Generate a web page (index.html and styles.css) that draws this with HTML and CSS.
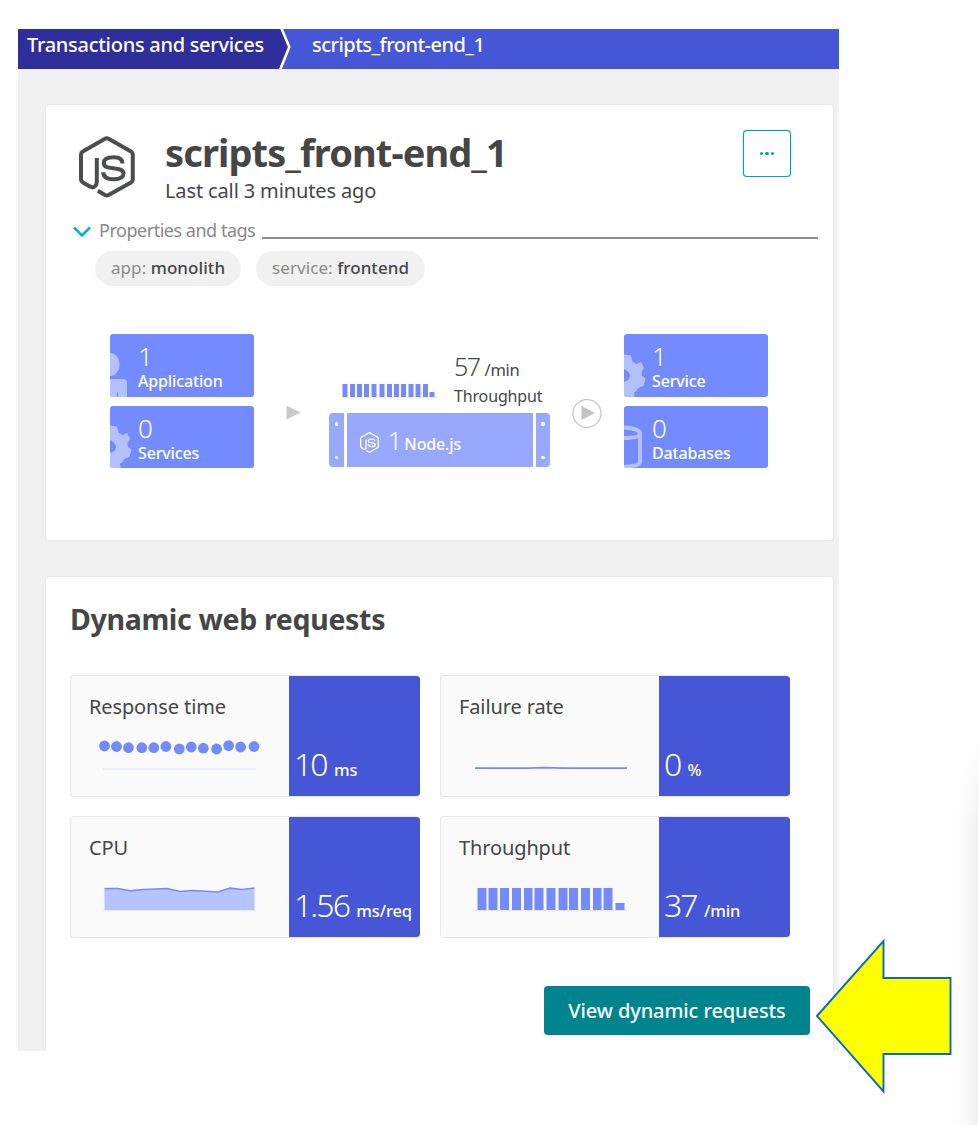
FILE: index.html
```html
<!DOCTYPE html>
<html lang="en">
<head>
<meta charset="utf-8">
<title>scripts_front-end_1</title>
<link rel="stylesheet" href="styles.css">
</head>
<body>
<svg class="defs" width="0" height="0" aria-hidden="true">
  <symbol id="nodejs" viewBox="0 0 56 62">
    <g fill="none" stroke="currentColor" stroke-linejoin="round">
      <path stroke-width="4" d="M17.8 22v23.5c0 5.5-4 6.8-7.8 4.6l-5.3-3.1q-2.700-1.500-2.700-4V18.500q0-2 1.800-3L26 2.800q1.800-1 3.600 0L52 15.500q1.800 1 1.800 3v25q0 2-1.800 3L29.600 59q-1.800 1-3.600 0l-7.200-4.200"/>
      <path stroke-width="4" d="M43.500 27.500c0-4-3-6.300-9-6.300s-9.700 1.800-9.700 5.700c0 4.300 4.500 4.800 9.500 5.400 5.500.6 10.200 1.200 10.200 5.200 0 3.800-3.500 5.700-9.800 5.700-6.700 0-10.400-2.200-10.400-7"/>
    </g>
  </symbol>
  <symbol id="gear" viewBox="0 0 22 43">
    <path fill="#b4c1ff" fill-rule="evenodd" d="M0 0.500 7 1.500 8.500 7.500 12.500 10 17 8 20 14 17.500 18 18 22 21.500 24.500 19.500 32 15 33.500 12.500 36 14 36 10 38.500 10.500 43H0V28C4 27 6 25 6 22S4 17 0 15Z"/>
  </symbol>
</svg>
<main class="frame">
  <nav class="crumbs">
    <span class="crumb crumb-root">Transactions and services</span>
    <svg class="crumb-edge" width="14" height="40" viewBox="0 0 14 40"><path fill="#2f2f9c" d="M0 0H3.500L11.500 18 2 40H0z"/><path fill="none" stroke="#fff" stroke-width="2.600" d="M3.300-1 11.300 18 2 41"/></svg>
    <span class="crumb crumb-leaf">scripts_front-end_1</span>
  </nav>

  <section class="card overview">
    <header class="head">
      <svg class="head-icon" width="56" height="62"><use href="#nodejs"/></svg>
      <div class="head-text">
        <h1>scripts_front-end_1</h1>
        <p>Last call 3 minutes ago</p>
      </div>
      <button class="more" aria-label="More"><i></i><i></i><i></i></button>
    </header>
    <div class="props">
      <svg width="18" height="12" viewBox="0 0 18 12"><path d="M1 1.500 9 9.500 17 1.500" fill="none" stroke="#00b4cc" stroke-width="2.500"/></svg>
      <span>Properties and tags</span>
      <div class="rule"></div>
    </div>
    <div class="tags">
      <span class="tag">app: <b>monolith</b></span>
      <span class="tag">service: <b>frontend</b></span>
    </div>
    <div class="flow">
      <div class="stack">
        <div class="box">
          <svg class="box-icon" width="18" height="44" viewBox="0 0 18 44"><g fill="#b4c1ff"><path d="M0 0a9.500 11.500 0 0 1 0 23z"/><path d="M0 26H13Q17 26 17 30V44H0z"/></g><path d="M7.500 39.500V44" stroke="#748bff"/></svg>
          <span class="num">1</span><span class="lbl">Application</span>
        </div>
        <div class="box">
          <svg class="box-icon gear" width="22" height="43"><use href="#gear"/></svg>
          <span class="num">0</span><span class="lbl">Services</span>
        </div>
      </div>
      <svg class="arrow" width="15" height="15" viewBox="0 0 15 15"><path d="M.5.5 14.500 7.500.5 14.500z" fill="#c8c8c8"/></svg>
      <div class="center">
        <div class="traffic">
          <svg width="96" height="16" viewBox="0 0 96 16"><path stroke="#e3e7ff" d="M0 14.500H96"/><path fill="#748bff" d="M1.500 1h5v13h-5zM9 1h5v13H9zM16 1h5v13h-5zM23 1h5v13h-5zM30.500 1h5v13h-5zM38.500 1h5v13h-5zM46 1h5v13h-5zM53 1h5v13h-5zM60 1h5v13h-5zM67.500 1h5v13h-5zM74.500 1h5v13h-5zM82 1h5v13h-5zM88.500 9h5v5h-5z"/></svg>
          <div class="rate">
            <div class="rate-val"><span>57</span> /min</div>
            <div class="rate-lbl">Throughput</div>
          </div>
        </div>
        <div class="server">
          <div class="rail"><i></i><i></i></div>
          <div class="body">
            <svg width="19" height="21"><use href="#nodejs"/></svg>
            <span class="num">1</span><span class="lbl">Node.js</span>
          </div>
          <div class="rail right"><i></i><i></i></div>
        </div>
      </div>
      <svg class="play" width="30" height="30" viewBox="0 0 30 30"><circle cx="15" cy="14.500" r="14" fill="#fff" stroke="#c8c8c8" stroke-width="1.300"/><path d="M9.500 7 23 14 9.500 21z" fill="#c4c4c4"/></svg>
      <div class="stack">
        <div class="box">
          <svg class="box-icon gear" width="22" height="43"><use href="#gear"/></svg>
          <span class="num">1</span><span class="lbl">Service</span>
        </div>
        <div class="box">
          <svg class="box-icon gear" width="19" height="43" viewBox="0 0 19 43"><g fill="none" stroke="#b4c1ff" stroke-width="4"><path d="M0 2.500C9 3 16 5 16 8.500S9 13 0 13"/><path d="M16 8.500V37Q16 41 0 42"/></g></svg>
          <span class="num">0</span><span class="lbl">Databases</span>
        </div>
      </div>
    </div>
  </section>

  <section class="card requests">
    <h2>Dynamic web requests</h2>
    <div class="tiles">
      <article class="tile">
        <div class="info"><h3>Response time</h3>
          <svg width="170" height="40" viewBox="0 0 170 40"><path stroke="#e6eaff" stroke-width="1.600" d="M8 32H161"/><g fill="#748bff"><circle cx="9.500" cy="9" r="5.400"/><circle cx="21.500" cy="9.500" r="5.400"/><circle cx="33.500" cy="10.700" r="5.400"/><circle cx="46.800" cy="10.700" r="5.400"/><circle cx="58.800" cy="10.700" r="5.400"/><circle cx="70.900" cy="9.500" r="5.400"/><circle cx="84.300" cy="12" r="5.400"/><circle cx="96.300" cy="10" r="5.400"/><circle cx="108.300" cy="11.200" r="5.400"/><circle cx="121.600" cy="12" r="5.400"/><circle cx="133.600" cy="8.600" r="5.400"/><circle cx="145.600" cy="10" r="5.400"/><circle cx="159" cy="9.500" r="5.400"/></g></svg></div>
        <div class="value"><span>10</span> ms</div>
      </article>
      <article class="tile">
        <div class="info"><h3>Failure rate</h3>
          <svg width="170" height="40" viewBox="0 0 170 40"><path fill="none" stroke="#748bff" stroke-width="1.800" d="M10 31.200H62L80 30.700 98 31.200H162"/></svg></div>
        <div class="value"><span>0</span> %</div>
      </article>
      <article class="tile">
        <div class="info"><h3>CPU</h3>
          <svg width="170" height="40" viewBox="0 0 170 40"><path fill="#b5c3ff" d="M9.500 10.500H23L35 12.800 48 11.500 72 10.500 85 13.500 97 12.500 123 14 135 10 147 11.500 159.500 10V32H9.500z"/><path fill="none" stroke="#748bff" stroke-width="1.600" d="M9.500 10.500H23L35 12.800 48 11.500 72 10.500 85 13.500 97 12.500 123 14 135 10 147 11.500 159.500 10"/><path stroke="#e3e7ff" d="M8 32.500H161"/></svg></div>
        <div class="value"><span>1.56</span> ms/req</div>
      </article>
      <article class="tile">
        <div class="info"><h3>Throughput</h3>
          <svg width="170" height="40" viewBox="0 0 170 40"><path stroke="#e3e7ff" d="M10 32.500H162"/><path fill="#748bff" d="M12.500 10h9v22h-9zM23.500 10h9v22h-9zM35 10h9v22h-9zM47 10h9v22h-9zM59 10h8.500v22H59zM69.500 10h9v22h-9zM81.500 10h9v22h-9zM93.500 10h9v22h-9zM104 10h9v22h-9zM116 10h9v22h-9zM128 10h8.500v22H128zM138.500 10h9v22h-9zM150.500 25h9v7h-9z"/></svg></div>
        <div class="value"><span>37</span> /min</div>
      </article>
    </div>
    <button class="view">View dynamic requests</button>
  </section>
</main>
<div class="edge-shadow"></div>
<svg class="callout" width="137" height="160" viewBox="0 0 137 160"><path d="M2 79 68.500 4V41H135.500V117H68.500V154.500z" fill="#ff0" stroke="#0b6cbc" stroke-width="1.900"/></svg>
</body>
</html>
```
FILE: styles.css
```css
* { box-sizing: border-box; }
body {
  margin: 0;
  width: 979px;
  height: 1125px;
  padding: 29px 0 0 18px;
  background: #fff;
  color: #454646;
  font-family: "Noto Sans", sans-serif;
  position: relative;
  overflow: hidden;
}
.defs { position: absolute; }
h1, h2, h3, p { margin: 0; }
button { font-family: inherit; padding: 0; border: 0; }
svg { display: block; flex: none; }

.frame { width: 821px; height: 1022px; background: #f1f1f1; overflow: hidden; }

.crumbs {
  display: flex;
  height: 40px;
  background: #4556d7;
  color: #fff;
  font-size: 20px;
  font-weight: 500;
  line-height: 32px;
  white-space: nowrap;
}
.crumb-root { width: 260px; padding-left: 9px; background: #2f2f9c; letter-spacing: -.29px; }
.crumb-leaf { padding-left: 20px; letter-spacing: -.53px; }

.card {
  width: 787px;
  margin-left: 28px;
  background: #fff;
  border-radius: 3px;
  box-shadow: 0 0 2px rgba(0, 0, 0, .13);
}
.overview { height: 435px; margin-top: 36px; padding-top: 25px; }
.requests { height: 500px; margin-top: 37px; padding: 21px 0 0 24px; }

.head { display: flex; height: 88px; padding-left: 33px; }
.head-icon { margin-top: 6px; color: #4c4d4d; }
.head-text { width: 608px; padding-left: 30px; white-space: nowrap; }
.head h1 { font-size: 38px; line-height: 44px; font-weight: 700; letter-spacing: -.9px; }
.head p { margin-top: 5px; font-size: 20px; line-height: 24px; letter-spacing: -.13px; }
.more {
  display: flex;
  align-items: center;
  justify-content: center;
  gap: 2px;
  width: 48px;
  height: 47px;
  border: 1.500px solid #00a1b2;
  border-radius: 4px;
  background: #fff;
  box-shadow: 0 0 1px #00a1b2;
}
.more i { width: 3.500px; height: 3.500px; border-radius: 50%; background: #00a1b2; }

.props {
  display: flex;
  height: 24px;
  padding: 0 15px 0 27px;
  color: #898989;
  font-size: 18px;
  line-height: 24px;
  letter-spacing: -.48px;
  white-space: nowrap;
}
.props svg { margin: 8px 8px 0 0; }
.rule { flex: 1; height: 2px; margin: 19px 0 0 7px; background: #8c8c8c; }

.tags { display: flex; gap: 15px; padding: 9px 0 0 49px; }
.tag {
  height: 35px;
  padding: 0 16px;
  border-radius: 18px;
  background: #f1f1f1;
  color: #898989;
  font-size: 17px;
  line-height: 34px;
  letter-spacing: .06px;
  white-space: nowrap;
}
.tag b { color: #454646; font-weight: 500; }

.flow { display: flex; margin-top: 48px; padding-left: 64px; }
.stack { display: flex; flex-direction: column; gap: 9px; }
.box {
  position: relative;
  display: flex;
  flex-direction: column;
  width: 144px;
  height: 62.500px;
  padding: 9px 0 0 28px;
  border-radius: 3px;
  background: #748bff;
  color: #fff;
  overflow: hidden;
}
.box-icon { position: absolute; left: 0; bottom: 0; }
.num { font-size: 26px; line-height: 26px; font-weight: 350; }
.lbl { font-size: 16px; line-height: 24px; font-weight: 500; letter-spacing: -.15px; }
.arrow { margin: 71px 28px 0 32px; }
.center { width: 221px; padding-top: 19px; }
.traffic { display: flex; height: 60px; padding-left: 12px; }
.traffic svg { margin-top: 30px; }
.rate { padding-left: 17px; white-space: nowrap; }
.rate-val { font-size: 16.500px; line-height: 26px; letter-spacing: -.3px; }
.rate-val span { font-size: 25px; font-weight: 350; letter-spacing: -1.500px; margin-right: 1px; }
.rate-lbl { font-size: 16px; line-height: 26px; letter-spacing: -.15px; }
.server { display: flex; gap: 3px; height: 54px; }
.rail {
  display: flex;
  flex-direction: column;
  justify-content: space-between;
  align-items: center;
  width: 14.500px;
  padding: 9px 0 8px;
  border-radius: 4px 0 0 4px;
  background: #98a8ff;
}
.rail.right { border-radius: 0 4px 4px 0; }
.rail i { width: 3.500px; height: 3.500px; border-radius: 50%; background: #fff; }
.body {
  flex: 1;
  display: flex;
  align-items: baseline;
  padding: 14px 0 0 13px;
  background: #98a8ff;
  color: #fff;
}
.body svg { align-self: flex-start; margin-top: 5px; }
.body .num { margin: 0 2px 0 9px; }
.play { margin: 65px 22px 0 22px; }

h2 { font-size: 28.500px; line-height: 42px; font-weight: 700; letter-spacing: -.33px; }
.tiles { display: grid; grid-template-columns: 350px 350px; gap: 19px 20px; padding-top: 35px; }
.tile {
  display: flex;
  height: 122px;
  border: 1px solid #e8e8e8;
  border-right: 0;
  border-radius: 4px;
  background: #fafafa;
  overflow: hidden;
}
.info { width: 218px; padding: 18px 0 0 18px; }
.info h3 { font-size: 20px; line-height: 26px; font-weight: 400; letter-spacing: -.12px; }
.info svg { margin: 17px 0 0 6px; }
.value {
  flex: 1;
  padding: 64px 0 0 5px;
  background: #4556d7;
  color: #fff;
  font-size: 16.500px;
  font-weight: 500;
  line-height: 48px;
  letter-spacing: -.1px;
  white-space: nowrap;
}
.value span { font-size: 32px; font-weight: 350; letter-spacing: -1.900px; margin-right: 3px; }
.view {
  display: block;
  width: 266px;
  height: 49px;
  margin: 48px 0 0 474px;
  border-radius: 4px;
  background: #00848e;
  color: #fff;
  font-size: 20px;
  font-weight: 500;
  letter-spacing: -.1px;
}

.edge-shadow {
  position: absolute;
  left: 950px;
  top: 740px;
  width: 28px;
  height: 385px;
  background: linear-gradient(to right, rgba(0, 0, 0, 0), rgba(0, 0, 0, .015) 55%, rgba(0, 0, 0, .06));
  -webkit-mask-image: linear-gradient(to bottom, transparent, #000 90px);
  mask-image: linear-gradient(to bottom, transparent, #000 90px);
}
.callout { position: absolute; left: 815px; top: 937px; }
```
